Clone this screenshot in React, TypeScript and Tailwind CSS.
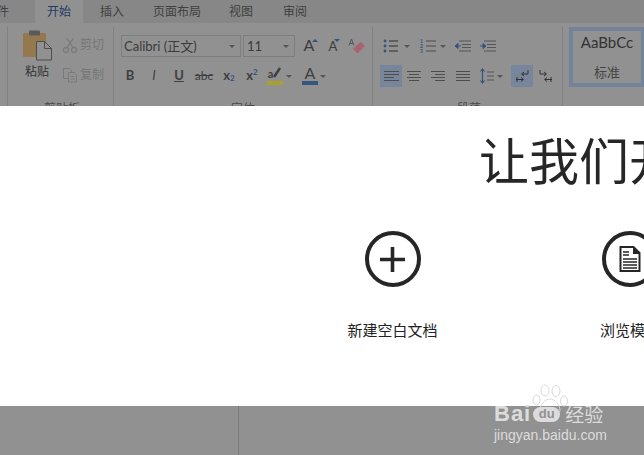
import type { ReactNode } from "react";

const cjk = "font-['Lato','Noto_Sans_CJK_SC',sans-serif]";

function Tab({ label, active, width }: { label: string; active?: boolean; width: string }) {
  return (
    <div
      className={`flex h-full items-center justify-center text-[12px] ${width} ${
        active ? "bg-[#919191] text-[#1f3a63]" : "text-[#3f3f3f]"
      }`}
    >
      {label}
    </div>
  );
}

function Group({ width, label, labelPad, children }: { width: string; label: string; labelPad: string; children: ReactNode }) {
  return (
    <div className={`flex shrink-0 flex-col border-r border-[#808080] ${width}`}>
      <div className="h-[75px] shrink-0">{children}</div>
      <div className={`text-[12px] leading-[14px] text-[#4a4a4a] ${labelPad}`}>{label}</div>
    </div>
  );
}

function PasteIcon() {
  return (
    <svg width="30" height="32" viewBox="0 0 30 32">
      <rect x="1" y="4" width="23" height="24" rx="1" fill="#94794f" />
      <rect x="7" y="1.5" width="11" height="5" rx="1" fill="#5a5a5a" />
      <path d="M14.5 12.5h8l7 7v11.500h-15z" fill="#919191" stroke="#4d4d4d" />
      <path d="M22.500 12.500v7h7" fill="none" stroke="#4d4d4d" />
    </svg>
  );
}

function CutIcon() {
  return (
    <svg width="16" height="16" viewBox="0 0 16 16" fill="none" stroke="#7a7a7a" strokeWidth="1.300">
      <circle cx="4" cy="13" r="2.500" />
      <circle cx="12" cy="13" r="2.500" />
      <path d="M5 10.500 11.500 1M11 10.500 4.500 1" />
    </svg>
  );
}

function CopyIcon() {
  return (
    <svg width="16" height="16" viewBox="0 0 16 16" fill="none" stroke="#7a7a7a">
      <path d="M1.500 1.500h6l2 2v8h-8z" />
      <path d="M6.500 5.500h6l2 2v7.500h-8z" fill="#919191" />
      <path d="M8.500 9.500h4M8.500 12h4" />
    </svg>
  );
}

function Caret({ className }: { className?: string }) {
  return <span className={`block h-0 w-0 shrink-0 border-x-[3px] border-t-[3px] border-x-transparent border-t-[#555] ${className ?? ""}`} />;
}

function GrowFont({ mark, size }: { mark: string; size: string }) {
  return (
    <div className="relative flex w-[24px] items-end justify-center pb-[4px]">
      <span className={`${size} leading-none text-[#3d3d3d]`}>A</span>
      <span className={`absolute top-[4px] h-0 w-0 border-x-[3px] border-x-transparent ${mark}`} />
    </div>
  );
}

function Eraser() {
  return (
    <svg width="17" height="17" viewBox="0 0 17 17">
      <path d="M5.500 10.500 11.500 4.500q1-1 2 0l2.500 2.500q1 1 0 2l-5.500 5.500q-1 1-2 0l-3-3q-1-1 0-2z" fill="#a8646e" />
      <path d="M1 7.500 3.500 1 6 7.500M1.800 5.500h3.400" fill="none" stroke="#555" />
    </svg>
  );
}

function Fmt({ children, width, className }: { children: ReactNode; width: string; className?: string }) {
  return <div className={`flex items-center justify-center text-[#3f3f3f] ${width} ${className ?? ""}`}>{children}</div>;
}

function Lines({ rows, className }: { rows: string[]; className?: string }) {
  return (
    <div className={`flex h-[24px] w-[24px] flex-col justify-center gap-[2px] ${className ?? ""}`}>
      {rows.map((r, i) => (
        <span key={i} className={`block h-[1px] bg-[#4d4d4d] ${r}`} />
      ))}
    </div>
  );
}

function ListIcon({ numbered }: { numbered?: boolean }) {
  return (
    <svg width="16" height="14" viewBox="0 0 16 14" className="shrink-0">
      {numbered ? (
        <>
          <text x="0" y="4" fontSize="5" fontWeight="700" fill="#32557f">1</text>
          <text x="0" y="9" fontSize="5" fontWeight="700" fill="#32557f">2</text>
          <text x="0" y="14" fontSize="5" fontWeight="700" fill="#32557f">3</text>
          <path d="M6 2h10M6 7h10M6 12h10" stroke="#4a4a4a" />
        </>
      ) : (
        <>
          <circle cx="2" cy="2" r="1.400" fill="#32557f" />
          <circle cx="2" cy="7" r="1.400" fill="#32557f" />
          <circle cx="2" cy="12" r="1.400" fill="#32557f" />
          <path d="M6 2h9M6 7h9M6 12h9" stroke="#2f2f2f" />
        </>
      )}
    </svg>
  );
}

function IndentIcon({ flip }: { flip?: boolean }) {
  return (
    <svg width="16" height="14" viewBox="0 0 16 14">
      <path d="M4 2h12M7 5.500h9M7 8.500h9M4 12h12" stroke="#555" />
      {flip ? (
        <path d="M0 7h4M3 4.500 6 7 3 9.500z" stroke="#32557f" fill="#32557f" />
      ) : (
        <path d="M6 7H2M3 4.500 0 7l3 2.500z" stroke="#32557f" fill="#32557f" />
      )}
    </svg>
  );
}

function SpacingIcon() {
  return (
    <svg width="14" height="16" viewBox="0 0 14 16" className="shrink-0">
      <path d="M2.500 1v14M.5 3.500l2-2.500 2 2.500M.5 12.500l2 2.500 2-2.500" fill="none" stroke="#32557f" strokeWidth="1.200" />
      <path d="M7 4h7M7 8h7M7 12h7" stroke="#555" />
    </svg>
  );
}

function DirectionIcon({ flip }: { flip?: boolean }) {
  return (
    <svg width="15" height="15" viewBox="0 0 15 15" className={flip ? "-scale-x-100" : ""}>
      <path d="M13 1v4H7M9 3 6.500 5 9 7" fill="none" stroke="#333" />
      <path d="M1 10.500h7M6 8.500l2.500 2-2.500 2M2 8v5" fill="none" stroke="#333" />
    </svg>
  );
}

function HighlightIcon() {
  return (
    <div className="flex w-[16px] flex-col items-center pb-[2px]">
      <div className="flex h-[13px] items-end">
        <span className="text-[11px] font-bold leading-[11px] text-[#3f3f3f]">a</span>
        <svg width="9" height="13" viewBox="0 0 9 13">
          <path d="M1 11 7 2" stroke="#3f3f3f" strokeWidth="2.500" />
        </svg>
      </div>
      <span className="mt-[2px] h-[4px] w-[16px] bg-[#ac9f2c]" />
    </div>
  );
}

function Paw() {
  return (
    <svg width="36" height="32" viewBox="0 0 36 32" fill="none" stroke="#d9d9d9" strokeWidth="1">
      <ellipse cx="4.500" cy="16" rx="3.500" ry="5" />
      <ellipse cx="13" cy="6.500" rx="4" ry="5.500" />
      <ellipse cx="24" cy="7" rx="4" ry="5.500" />
      <ellipse cx="32" cy="17" rx="3.500" ry="5" />
      <path d="M18 15c-5 0-10 6-10 11 0 5 6 3 10 3s10 2 10-3c0-5-5-11-10-11z" />
    </svg>
  );
}

function Action({ width, icon, label }: { width: string; icon: ReactNode; label: string }) {
  return (
    <div className={`flex shrink-0 flex-col items-center ${width}`}>
      <div className="flex h-[56px] w-[56px] shrink-0 items-center justify-center rounded-full border-[4px] border-[#262626]">
        {icon}
      </div>
      <div className="mt-[33px] whitespace-nowrap text-[15px] leading-[20px] text-[#222]">{label}</div>
    </div>
  );
}

function PlusGlyph() {
  return (
    <svg width="25" height="25" viewBox="0 0 25 25">
      <path d="M12.500 0v25M0 12.500h25" stroke="#262626" strokeWidth="3.600" />
    </svg>
  );
}

function DocGlyph() {
  return (
    <svg width="22" height="26" viewBox="0 0 22 26" fill="none">
      <path d="M1.500 1h13l6 6v18h-19z" stroke="#262626" strokeWidth="2" />
      <path d="M14 1v7h7" fill="#262626" />
      <path d="M4 6h6M4 9h6M4 13h14M4 16h14M4 19h14M4 22h14" stroke="#262626" strokeWidth="1.600" />
    </svg>
  );
}

export default function App() {
  return (
    <div className={`relative flex h-[455px] w-[644px] flex-col overflow-hidden bg-[#919191] ${cjk}`}>
      {/* dimmed ribbon */}
      <div className="flex h-[23px] shrink-0 bg-[#878787]">
        <div className="flex h-full w-[35px] items-center justify-start text-[12px] text-[#3f3f3f]">
          <span className="ml-[-3px]">件</span>
        </div>
        <Tab label="开始" active width="w-[48px]" />
        <Tab label="插入" width="w-[58px]" />
        <Tab label="页面布局" width="w-[72px]" />
        <Tab label="视图" width="w-[56px]" />
        <Tab label="审阅" width="w-[52px]" />
      </div>
      <div className="flex h-[83px] shrink-0 overflow-hidden bg-[#919191] pt-[4px]">
        <div className="w-[8px] shrink-0 border-r border-[#808080]" />
        <Group width="w-[106px]" label="剪贴板" labelPad="pl-[36px]">
          <div className="flex">
            <div className="ml-[14px] flex w-[30px] flex-col items-center pt-[2px]">
              <PasteIcon />
              <span className="mt-[3px] whitespace-nowrap text-[12px] leading-[16px] text-[#333]">粘贴</span>
            </div>
            <div className="ml-[10px] flex flex-col gap-[14px] pt-[10px] text-[12px] leading-[16px] text-[#757575]">
              <div className="flex items-center gap-[2px]">
                <CutIcon />
                <span>剪切</span>
              </div>
              <div className="flex items-center gap-[2px]">
                <CopyIcon />
                <span>复制</span>
              </div>
            </div>
          </div>
        </Group>
        <Group width="w-[259px]" label="字体" labelPad="pl-[117px]">
          <div className="flex flex-col pl-[7px] pt-[8px]">
            <div className="flex h-[22px] items-center">
              <div className="flex h-[22px] w-[120px] items-center justify-between border border-[#7e7e7e] pl-[2px] pr-[5px] pt-[1px] text-[13px] text-[#3a3a3a]">
                <span>Calibri (正文)</span>
                <Caret />
              </div>
              <div className="ml-[2px] flex h-[22px] w-[52px] items-center justify-between border border-[#7e7e7e] pl-[3px] pr-[5px] pt-[1px] text-[13px] text-[#3a3a3a]">
                <span>11</span>
                <Caret />
              </div>
              <div className="ml-[2px] flex h-[22px]">
                <GrowFont size="text-[16px]" mark="right-[3px] border-b-[3px] border-b-[#32557f]" />
                <GrowFont size="text-[13px]" mark="right-[5px] border-t-[3px] border-t-[#32557f]" />
                <div className="flex w-[22px] items-center justify-center">
                  <Eraser />
                </div>
              </div>
            </div>
            <div className="mt-[7px] flex h-[24px] items-center text-[13px]">
              <Fmt width="w-[18px]" className="font-bold">B</Fmt>
              <Fmt width="w-[30px]" className="italic">I</Fmt>
              <Fmt width="w-[20px]" className="font-bold underline">U</Fmt>
              <Fmt width="w-[30px]" className="text-[12px] line-through">abc</Fmt>
              <Fmt width="w-[20px]" className="font-bold">
                x<sub className="text-[8px] text-[#32557f]">2</sub>
              </Fmt>
              <Fmt width="w-[26px]" className="font-bold">
                x<sup className="text-[8px] text-[#32557f]">2</sup>
              </Fmt>
              <div className="ml-[2px]">
                <HighlightIcon />
              </div>
              <Caret className="ml-[3px] mr-[10px]" />
              <div className="flex w-[16px] flex-col items-center pb-[2px]">
                <span className="h-[13px] text-[16px] leading-[13px] text-[#3f3f3f]">A</span>
                <span className="mt-[2px] h-[4px] w-[16px] bg-[#34567f]" />
              </div>
              <Caret className="ml-[2px]" />
            </div>
          </div>
        </Group>
        <Group width="w-[190px]" label="段落" labelPad="pl-[84px]">
          <div className="flex flex-col pl-[7px] pt-[8px]">
            <div className="flex h-[22px] items-center">
              <div className="ml-[3px] flex w-[37px] items-center gap-[5px]">
                <ListIcon />
                <Caret />
              </div>
              <div className="flex w-[35px] items-center gap-[4px]">
                <ListIcon numbered />
                <Caret />
              </div>
              <div className="flex w-[25px]">
                <IndentIcon />
              </div>
              <IndentIcon flip />
            </div>
            <div className="mt-[7px] flex h-[24px] items-center">
              <div className="flex h-[22px] w-[22px] items-center justify-center bg-[#78869c]">
                <Lines rows={["w-[15px] mx-auto", "w-[15px] mx-auto", "w-[10px] ml-[4px]", "w-[15px] mx-auto"]} />
              </div>
              <Lines rows={["w-[14px] mx-auto", "w-[10px] mx-auto", "w-[14px] mx-auto", "w-[10px] mx-auto"]} />
              <Lines rows={["w-[14px] mx-auto", "w-[10px] ml-[9px]", "w-[14px] mx-auto", "w-[10px] ml-[9px]"]} />
              <Lines className="ml-[1px]" rows={["w-[14px] mx-auto", "w-[14px] mx-auto", "w-[14px] mx-auto", "w-[14px] mx-auto"]} />
              <div className="ml-[5px] flex w-[31px] items-center gap-[3px]">
                <SpacingIcon />
                <Caret />
              </div>
              <div className="flex h-[22px] w-[22px] items-center justify-center bg-[#78869c]">
                <DirectionIcon />
              </div>
              <div className="flex w-[24px] justify-center">
                <DirectionIcon flip />
              </div>
            </div>
          </div>
        </Group>
        <div className="ml-[6px] flex h-[60px] w-[76px] shrink-0 flex-col items-center border-[4px] border-[#74839a] pt-[1px]">
          <span className="text-[15px] leading-[20px] text-[#333]">AaBbCc</span>
          <span className="mt-[12px] text-[13px] leading-[16px] text-[#444]">标准</span>
        </div>
      </div>

      {/* start dialog band */}
      <div className="flex h-[300px] shrink-0 flex-col overflow-hidden bg-white">
        <div className="whitespace-nowrap pl-[479px] pt-[22px] text-[50px] font-normal leading-[66px] text-[#262626]">
          让我们开始吧
        </div>
        <div className="mt-[37px] flex pl-[347px]">
          <Action width="w-[91px]" icon={<PlusGlyph />} label="新建空白文档" />
          <div className="ml-[164px]">
            <Action width="w-[56px]" icon={<DocGlyph />} label="浏览模板" />
          </div>
        </div>
      </div>

      <div className="min-h-0 flex-1 bg-[#919191]">
        <div className="ml-[238px] h-full w-[1px] bg-[#7a7a7a]" />
      </div>

      {/* baidu watermark */}
      <div className="absolute left-[494px] top-[384px] w-[116px] text-[#dcdcdc]">
        <div className="ml-[38px]">
          <Paw />
        </div>
        <div className="mt-[-12px] flex items-center font-['Liberation_Sans',sans-serif] text-[22px] font-bold leading-[20px] tracking-[1px]">
          <span>Bai</span>
          <span className="ml-[2px] flex h-[15px] w-[27px] items-center justify-center rounded-full bg-[#dcdcdc] text-[13px] tracking-normal text-[#919191]">
            du
          </span>
          <span className="ml-[5px] font-['Noto_Sans_CJK_SC',sans-serif] text-[19px] font-normal tracking-normal">经验</span>
        </div>
        <div className="mt-[2px] whitespace-nowrap font-['Liberation_Sans',sans-serif] text-[14px] leading-[18px]">
          jingyan.baidu.com
        </div>
      </div>
    </div>
  );
}
